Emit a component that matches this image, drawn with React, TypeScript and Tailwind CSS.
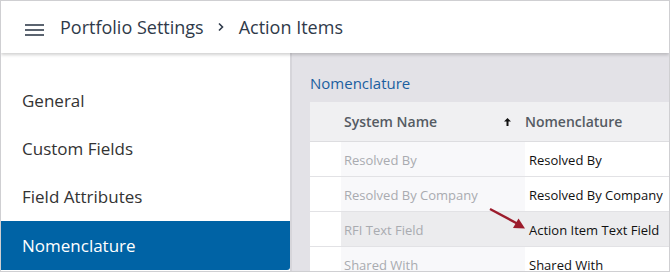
import React from "react";

const rows = [
  { sys: "Resolved By", nom: "Resolved By" },
  { sys: "Resolved By Company", nom: "Resolved By Company" },
  { sys: "RFI Text Field", nom: "Action Item Text Field", hl: true },
  { sys: "Shared With", nom: "Shared With" },
];

export default function App() {
  return (
    <div
      className="w-[670px] h-[272px] overflow-hidden border border-[#cfcfd2] bg-[#e3e2e7] flex flex-col"
      style={{ fontFamily: '"Open Sans", sans-serif' }}
    >
      <div className="h-[52px] shrink-0 bg-white flex items-center relative z-10 shadow-[0_2px_3px_rgba(0,0,0,0.18)]">
        <div className="ml-[24px] w-[19px] flex flex-col gap-[3px] mt-[6px]">
          <div className="h-[2px] bg-[#5b6470]" />
          <div className="h-[2px] bg-[#5b6470]" />
          <div className="h-[2px] bg-[#5b6470]" />
        </div>
        <div className="ml-[16px] text-[18px] text-[#2f3a4a] flex items-center">
          <span>Portfolio Settings</span>
          <svg width="8" height="10" viewBox="0 0 8 10" className="ml-[13px] mr-[14px]">
            <path d="M2 1.5 L5.5 5 L2 8.5" stroke="#2f3a4a" strokeWidth="1.6" fill="none" />
          </svg>
          <span>Action Items</span>
        </div>
      </div>
      <div className="flex flex-1 min-h-0">
        <div className="w-[289px] shrink-0 bg-white pt-[24px] flex flex-col">
          {["General", "Custom Fields", "Field Attributes"].map((t) => (
            <div key={t} className="h-[48px] flex items-center pl-[21px] text-[17px] text-[#333]">
              {t}
            </div>
          ))}
          <div className="h-[49px] flex items-center pl-[21px] text-[17px] text-white bg-[#0063a5] rounded-br-[3px]">
            Nomenclature
          </div>
        </div>
        <div className="w-[2px] bg-[#d6d5da]" />
        <div className="flex-1 pl-[18px] pt-[19px] flex flex-col">
          <div className="text-[15px] text-[#1b5fa0] h-[22px] leading-[22px] mb-[8px]">Nomenclature</div>
          <div className="bg-white flex flex-col text-[13px]">
            <div className="h-[40px] flex items-center bg-[#f0f0f2] border-b border-[#dddde0]">
              <div className="w-[34px]" />
              <div className="w-[177px] flex items-center justify-between pr-[10px] font-semibold text-[#555b63] text-[14px]">
                <span>System Name</span>
                <svg width="7" height="8" viewBox="0 0 7 8">
                  <path d="M3.5 0 L7 3.5 L4.5 3.5 L4.5 8 L2.5 8 L2.5 3.5 L0 3.5 Z" fill="#111" />
                </svg>
              </div>
              <div className="pl-[4px] font-semibold text-[#555b63] text-[14px]">Nomenclature</div>
            </div>
            {rows.map((r) => (
              <div key={r.sys} className="h-[35px] flex border-b border-[#e2e2e5] relative">
                <div className="w-[31px] bg-white" />
                <div className={`w-[184px] flex items-center pl-[3px] pt-[3px] text-[#a9abb0] ${r.hl ? "bg-[#ececee]" : "bg-[#f8f8fa]"}`}>
                  {r.sys}
                </div>
                <div className={`flex-1 flex items-center pl-[4px] pt-[3px] text-[#111] ${r.hl ? "bg-[#ececee]" : "bg-white"}`}>
                  {r.nom}
                </div>
                {r.hl && (
                  <svg className="absolute left-[178px] top-[-5px]" width="40" height="26" viewBox="0 0 40 26">
                    <line x1="2" y1="2" x2="30" y2="17" stroke="#9c1c2c" strokeWidth="2.4" />
                    <path d="M37 21.5 L25 21 L30.5 11.5 Z" fill="#9c1c2c" />
                  </svg>
                )}
              </div>
            ))}
          </div>
        </div>
      </div>
    </div>
  );
}
